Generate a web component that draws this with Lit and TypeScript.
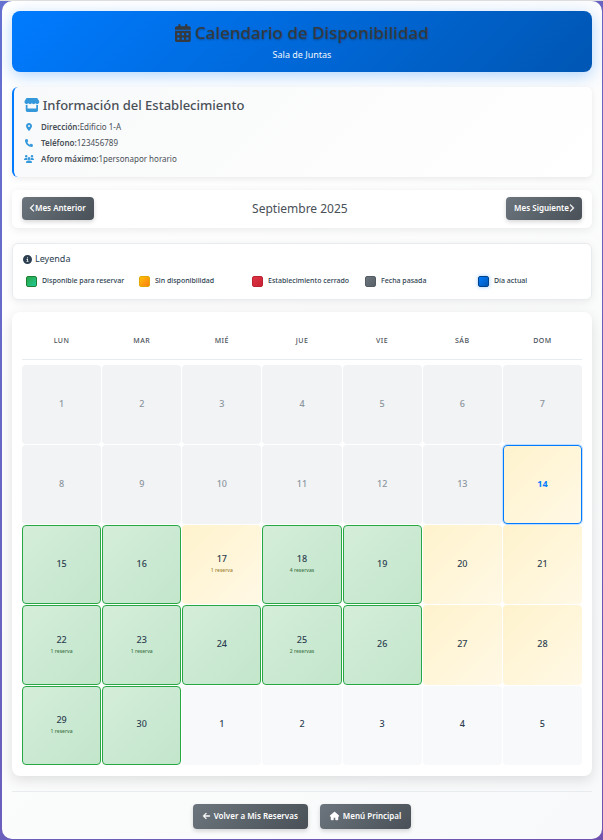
import { LitElement, html, css, svg } from "lit";
import { customElement, property } from "lit/decorators.js";
import { classMap } from "lit/directives/class-map.js";

type IconName =
  | "calendar" | "store" | "pin" | "phone" | "users"
  | "info" | "left" | "right" | "arrow" | "home";

const ICONS: Record<IconName, [number, string]> = {
  calendar: [448, "M128 0c17.7 0 32 14.3 32 32l0 32 128 0 0-32c0-17.7 14.3-32 32-32s32 14.3 32 32l0 32 48 0c26.5 0 48 21.5 48 48l0 48L0 160l0-48C0 85.5 21.5 64 48 64l48 0 0-32c0-17.7 14.3-32 32-32zM0 192l448 0 0 272c0 26.5-21.5 48-48 48L48 512c-26.5 0-48-21.5-48-48L0 192zm64 80l0 32c0 8.8 7.2 16 16 16l32 0c8.8 0 16-7.2 16-16l0-32c0-8.8-7.2-16-16-16l-32 0c-8.8 0-16 7.2-16 16zm128 0l0 32c0 8.8 7.2 16 16 16l32 0c8.8 0 16-7.2 16-16l0-32c0-8.8-7.2-16-16-16l-32 0c-8.8 0-16 7.2-16 16zm144-16c-8.8 0-16 7.2-16 16l0 32c0 8.8 7.2 16 16 16l32 0c8.8 0 16-7.2 16-16l0-32c0-8.8-7.2-16-16-16l-32 0zM64 400l0 32c0 8.8 7.2 16 16 16l32 0c8.8 0 16-7.2 16-16l0-32c0-8.8-7.2-16-16-16l-32 0c-8.8 0-16 7.2-16 16zm144-16c-8.8 0-16 7.2-16 16l0 32c0 8.8 7.2 16 16 16l32 0c8.8 0 16-7.2 16-16l0-32c0-8.8-7.2-16-16-16l-32 0zm112 16l0 32c0 8.8 7.2 16 16 16l32 0c8.8 0 16-7.2 16-16l0-32c0-8.8-7.2-16-16-16l-32 0c-8.8 0-16 7.2-16 16z"],
  store: [576, "M547.6 103.8L490.3 13.1C485.2 5 476.1 0 466.4 0H109.6C99.9 0 90.8 5 85.7 13.1L28.3 103.8c-29.6 46.8-3.4 111.9 51.9 119.4c4 .5 8.1 .8 12.1 .8c26.1 0 49.3-11.4 65.2-29c15.9 17.6 39.1 29 65.2 29c26.1 0 49.3-11.4 65.2-29c15.9 17.6 39.1 29 65.2 29c26.2 0 49.3-11.4 65.2-29c16 17.6 39.1 29 65.2 29c4.1 0 8.1-.3 12.1-.8c55.5-7.4 81.8-72.5 52.1-119.4zM499.7 254.9l-.1 0c-5.3 .7-10.7 1.1-16.2 1.1c-12.4 0-24.3-1.9-35.4-5.3V384H128V250.6c-11.2 3.5-23.2 5.4-35.6 5.4c-5.5 0-11-.4-16.3-1.1l-.1 0c-4.1-.6-8.1-1.3-12-2.3V384v64c0 35.3 28.7 64 64 64H448c35.3 0 64-28.7 64-64V384 252.6c-4 1-8 1.8-12.3 2.3z"],
  pin: [384, "M215.7 499.2C267 435 384 279.4 384 192C384 86 298 0 192 0S0 86 0 192c0 87.4 117 243 168.3 307.2c12.3 15.3 35.1 15.3 47.4 0zM192 128a64 64 0 1 1 0 128 64 64 0 1 1 0-128z"],
  phone: [512, "M164.9 24.6c-7.7-18.6-28-28.5-47.4-23.2l-88 24C12.1 30.2 0 46 0 64C0 311.4 200.6 512 448 512c18 0 33.8-12.1 38.6-29.5l24-88c5.3-19.4-4.6-39.7-23.2-47.4l-96-40c-16.3-6.8-35.2-2.1-46.3 11.6L304.7 368C234.3 334.7 177.3 277.7 144 207.3L193.3 167c13.7-11.2 18.4-30 11.6-46.3l-40-96z"],
  users: [640, "M144 0a80 80 0 1 1 0 160A80 80 0 1 1 144 0zM512 0a80 80 0 1 1 0 160A80 80 0 1 1 512 0zM0 298.7C0 239.8 47.8 192 106.7 192h42.7c15.9 0 31 3.5 44.6 9.7c-1.3 7.2-1.9 14.7-1.9 22.3c0 38.2 16.8 72.5 43.3 96c-.2 0-.4 0-.7 0H21.3C9.6 320 0 310.4 0 298.7zM405.3 320c-.2 0-.4 0-.7 0c26.6-23.5 43.3-57.8 43.3-96c0-7.6-.7-15-1.9-22.3c13.6-6.3 28.7-9.7 44.6-9.7h42.7C592.2 192 640 239.8 640 298.7c0 11.8-9.6 21.3-21.3 21.3H405.3zM224 224a96 96 0 1 1 192 0 96 96 0 1 1 -192 0zM128 485.3C128 411.7 187.7 352 261.3 352H378.7C452.3 352 512 411.7 512 485.3c0 14.7-11.9 26.7-26.7 26.7H154.7c-14.7 0-26.7-11.9-26.7-26.7z"],
  info: [512, "M256 512A256 256 0 1 0 256 0a256 256 0 1 0 0 512zM216 336h24V272H216c-13.3 0-24-10.7-24-24s10.7-24 24-24h48c13.3 0 24 10.7 24 24v88h8c13.3 0 24 10.7 24 24s-10.7 24-24 24H216c-13.3 0-24-10.7-24-24s10.7-24 24-24zm40-208a32 32 0 1 1 0 64 32 32 0 1 1 0-64z"],
  left: [320, "M9.4 233.4c-12.5 12.5-12.5 32.8 0 45.3l192 192c12.5 12.5 32.8 12.5 45.3 0s12.5-32.8 0-45.3L77.3 256 246.6 86.6c12.5-12.5 12.5-32.8 0-45.3s-32.8-12.5-45.3 0l-192 192z"],
  right: [320, "M310.6 233.4c12.5 12.5 12.5 32.8 0 45.3l-192 192c-12.5 12.5-32.8 12.5-45.3 0s-12.5-32.8 0-45.3L242.7 256 73.4 86.6c-12.5-12.5-12.5-32.8 0-45.3s32.8-12.5 45.3 0l192 192z"],
  arrow: [448, "M9.4 233.4c-12.5 12.5-12.5 32.8 0 45.3l160 160c12.5 12.5 32.8 12.5 45.3 0s12.5-32.8 0-45.3L109.2 288 416 288c17.7 0 32-14.3 32-32s-14.3-32-32-32l-306.7 0L214.6 118.6c12.5-12.5 12.5-32.8 0-45.3s-32.8-12.5-45.3 0l-160 160z"],
  home: [576, "M575.8 255.5c0 18-15 32.1-32 32.1h-32l.7 160.2c0 2.7-.2 5.4-.5 8.1V472c0 22.1-17.9 40-40 40H456c-1.1 0-2.2 0-3.3-.1c-1.4 .1-2.8 .1-4.2 .1H416 392c-22.1 0-40-17.9-40-40V448 384c0-17.7-14.3-32-32-32H256c-17.7 0-32 14.3-32 32v64 24c0 22.1-17.9 40-40 40H160 128.1c-1.5 0-3-.1-4.5-.2c-1.2 .1-2.4 .2-3.6 .2H104c-22.1 0-40-17.9-40-40V360c0-.9 0-1.9 .1-2.8V287.6H32c-18 0-32-14-32-32.1c0-9 3-17 10-24L266.4 8c7-7 15-8 22-8s15 2 21 7L564.8 231.5c8 7 12 15 11 24z"],
};

const icon = (name: IconName) => {
  const [width, path] = ICONS[name];
  return html`<svg class="icon" viewBox="0 0 ${width} 512" aria-hidden="true">${svg`<path d=${path}></path>`}</svg>`;
};

type DayState = "past" | "free" | "full" | "other";

interface Day {
  n: number;
  state: DayState;
  today?: boolean;
  bookings?: number;
}

const WEEKDAYS = ["Lun", "Mar", "Mié", "Jue", "Vie", "Sáb", "Dom"];

const FULL_DAYS = new Set([14, 17, 20, 21, 27, 28]);
const BOOKINGS: Record<number, number> = { 17: 1, 18: 4, 22: 1, 23: 1, 25: 2, 29: 1 };

const MONTH: Day[] = Array.from({ length: 35 }, (_, i) => {
  const n = i + 1;
  if (n > 30) return { n: n - 30, state: "other" };
  const state: DayState = n < 14 ? "past" : FULL_DAYS.has(n) ? "full" : "free";
  return { n, state, today: n === 14, bookings: BOOKINGS[n] };
});

const WEEKS = [0, 1, 2, 3, 4].map((w) => MONTH.slice(w * 7, w * 7 + 7));

const LEGEND = [
  ["free", "Disponible para reservar"],
  ["full", "Sin disponibilidad"],
  ["closed", "Establecimiento cerrado"],
  ["past", "Fecha pasada"],
  ["today", "Día actual"],
];

@customElement("month-grid")
export class MonthGrid extends LitElement {
  @property({ attribute: false }) weeks: Day[][] = [];

  static styles = css`
    :host { display: block; }
    table, thead, tbody { display: block; }
    tr { display: grid; grid-template-columns: repeat(7, minmax(0, 1fr)); column-gap: 1px; }
    thead { border-bottom: 1px solid #e9ecef; margin-bottom: 5px; }
    th {
      padding: 13px 0 12px;
      font-size: 7px;
      line-height: 12px;
      font-weight: 500;
      letter-spacing: 0.5px;
      text-transform: uppercase;
      color: #495057;
    }
    tbody { display: grid; row-gap: 1px; }
    td { display: block; padding: 0; aspect-ratio: 1; }
    .day {
      box-sizing: border-box;
      width: 100%;
      height: 100%;
      display: flex;
      flex-direction: column;
      align-items: center;
      justify-content: center;
      gap: 1px;
      margin: 0;
      padding: 0 0 2px;
      border: 1px solid transparent;
      border-radius: 4px;
      background: #f8f9fa;
      color: #2c3e50;
      font: inherit;
      font-size: 9px;
      line-height: 12px;
      font-weight: 500;
    }
    .past { background: #f1f3f5; color: #8c959d; }
    .other { background: #f8f9fb; }
    .full { background: linear-gradient(135deg, #fff3cd, #fff8e5) border-box; }
    .free {
      background: linear-gradient(135deg, #d4edda, #c3e6cb);
      border-color: #28a745;
      cursor: pointer;
    }
    .today {
      border-color: #007bff;
      box-shadow: 0 0 0 1px rgba(0, 123, 255, 0.25);
      color: #007bff;
      font-weight: 700;
    }
    .note { font-size: 5px; line-height: 8px; opacity: 0.8; color: #155724; }
    .full .note { color: #856404; }
  `;

  private day(day: Day) {
    const classes = classMap({ day: true, [day.state]: true, today: !!day.today });
    const body = html`
      <span>${day.n}</span>
      ${day.bookings
        ? html`<span class="note">${day.bookings} ${day.bookings === 1 ? "reserva" : "reservas"}</span>`
        : null}
    `;
    return day.state === "free"
      ? html`<button type="button" class=${classes}>${body}</button>`
      : html`<div class=${classes}>${body}</div>`;
  }

  render() {
    return html`
      <table>
        <thead>
          <tr>${WEEKDAYS.map((d) => html`<th scope="col">${d}</th>`)}</tr>
        </thead>
        <tbody>
          ${this.weeks.map((w) => html`<tr>${w.map((d) => html`<td>${this.day(d)}</td>`)}</tr>`)}
        </tbody>
      </table>
    `;
  }
}

@customElement("app-root")
export class AppRoot extends LitElement {
  static styles = css`
    :host {
      display: block;
      box-sizing: border-box;
      min-height: 100vh;
      padding: 0 1px 1px 2px;
      border-top: 1px solid #dedede;
      background: linear-gradient(135deg, #6571d0, #6f52ae);
      font-family: "Noto Sans", "Open Sans", sans-serif;
      font-size: 8px;
      line-height: 12px;
      color: #2c3e50;
    }
    h1, h2, h3, p, dl, dd, ul { margin: 0; padding: 0; }
    .icon { height: 1em; width: auto; flex: none; fill: currentColor; overflow: visible; }

    .page {
      padding: 10px;
      border-radius: 10px;
      background: linear-gradient(135deg, #ffffff, #f8f9fa);
    }
    .hero {
      display: flex;
      flex-direction: column;
      align-items: center;
      gap: 3px;
      padding: 10px;
      border-radius: 8px;
      background: linear-gradient(135deg, #007bff, #0056b3);
      box-shadow: 0 4px 16px rgba(0, 123, 255, 0.3);
      color: #fff;
    }
    h1 {
      display: flex;
      align-items: center;
      gap: 4px;
      font-size: 17px;
      line-height: 24px;
      font-weight: 500;
      color: #343a40;
      text-shadow: 0 1px 2px rgba(0, 0, 0, 0.3);
    }
    h1 .icon { height: 18px; }
    .place { font-size: 9px; line-height: 14px; opacity: 0.95; }

    .info {
      margin-top: 15px;
      padding: 9px 10px 12px;
      border-left: 2px solid #007bff;
      border-radius: 6px;
      background: linear-gradient(135deg, #f8f9fa, #ffffff);
      box-shadow: 0 2px 6px rgba(0, 0, 0, 0.08);
    }
    h2 {
      display: flex;
      align-items: center;
      gap: 3px;
      font-size: 13px;
      line-height: 18px;
      font-weight: 500;
      color: #495057;
    }
    h2 .icon { height: 14px; color: #3498db; }
    .facts { display: grid; gap: 4px; margin-top: 7px; }
    .fact { display: flex; align-items: center; color: #495057; }
    .fact dt { display: flex; align-items: center; gap: 7px; font-weight: 600; }
    .glyph { display: flex; justify-content: center; width: 10px; color: #3498db; }

    .nav {
      display: flex;
      align-items: center;
      justify-content: space-between;
      margin-top: 13px;
      padding: 7px 10px 8px;
      border-radius: 6px;
      background: #fff;
      box-shadow: 0 2px 8px rgba(0, 0, 0, 0.08);
    }
    .month { font-size: 12px; line-height: 16px; font-weight: 400; color: #495057; }
    .btn {
      display: inline-flex;
      align-items: center;
      padding: 5px 8px 6px;
      border: 0;
      border-radius: 4px;
      background: linear-gradient(135deg, #6c757d, #495057);
      box-shadow: 0 2px 4px rgba(0, 0, 0, 0.16);
      color: #fff;
      font: inherit;
      font-weight: 600;
      text-decoration: none;
      cursor: pointer;
    }
    .btn .icon { stroke: currentColor; stroke-width: 30; }

    .legend {
      margin-top: 15px;
      padding: 9px 10px;
      border: 1px solid #e9ecef;
      border-radius: 6px;
      background: #fff;
      box-shadow: 0 2px 8px rgba(0, 0, 0, 0.08);
    }
    h3 {
      display: flex;
      align-items: center;
      gap: 3px;
      font-size: 9px;
      line-height: 12px;
      font-weight: 400;
    }
    .keys {
      display: grid;
      grid-template-columns: repeat(5, minmax(0, 1fr));
      gap: 7px;
      margin-top: 7px;
      padding: 3px 0;
      list-style: none;
      font-size: 7px;
      font-weight: 500;
    }
    .key { display: flex; align-items: center; gap: 5px; padding: 0 3px; white-space: nowrap; }
    .swatch {
      box-sizing: border-box;
      flex: none;
      width: 11px;
      height: 11px;
      border: 1px solid;
      border-radius: 2px;
    }
    .free { background: linear-gradient(135deg, #28a745, #20c997); border-color: #1e7e34; }
    .full { background: linear-gradient(135deg, #ffc107, #fd7e14); border-color: #e0a800; }
    .closed { background: linear-gradient(135deg, #dc3545, #c82333); border-color: #bd2130; }
    .past { background: linear-gradient(135deg, #6c757d, #5a6268); border-color: #545b62; }
    .today {
      background: linear-gradient(135deg, #007bff, #0056b3);
      border-color: #004085;
      box-shadow: 0 0 4px rgba(0, 123, 255, 0.4);
    }

    .calendar {
      margin-top: 12px;
      padding: 10px 10px 11px;
      border-radius: 8px;
      background: #fff;
      box-shadow: 0 4px 14px rgba(0, 0, 0, 0.12);
    }
    .foot {
      display: flex;
      flex-wrap: wrap;
      justify-content: center;
      gap: 12px;
      margin-top: 15px;
      padding-top: 12px;
      border-top: 1px solid #e9ecef;
    }
    .foot .btn { gap: 4px; padding: 6px 10px 7px; }
  `;

  render() {
    return html`
      <main class="page">
        <header class="hero">
          <h1>${icon("calendar")}Calendario de Disponibilidad</h1>
          <p class="place">Sala de Juntas</p>
        </header>

        <section class="info">
          <h2>${icon("store")}Información del Establecimiento</h2>
          <dl class="facts">
            ${this.fact("pin", "Dirección:", "Edificio 1-A")}
            ${this.fact("phone", "Teléfono:", "123456789")}
            ${this.fact("users", "Aforo máximo:", "1personapor horario")}
          </dl>
        </section>

        <nav class="nav">
          <button type="button" class="btn">${icon("left")}Mes Anterior</button>
          <span class="month">Septiembre 2025</span>
          <button type="button" class="btn">Mes Siguiente${icon("right")}</button>
        </nav>

        <section class="legend">
          <h3>${icon("info")}Leyenda</h3>
          <ul class="keys">
            ${LEGEND.map(([kind, label]) => html`
              <li class="key"><span class="swatch ${kind}"></span>${label}</li>
            `)}
          </ul>
        </section>

        <section class="calendar">
          <month-grid .weeks=${WEEKS}></month-grid>
        </section>

        <footer class="foot">
          <a class="btn" href="#reservas">${icon("arrow")}Volver a Mis Reservas</a>
          <a class="btn" href="#menu">${icon("home")}Menú Principal</a>
        </footer>
      </main>
    `;
  }

  private fact(name: IconName, label: string, value: string) {
    return html`
      <div class="fact">
        <dt><span class="glyph">${icon(name)}</span>${label}</dt>
        <dd>${value}</dd>
      </div>
    `;
  }
}
